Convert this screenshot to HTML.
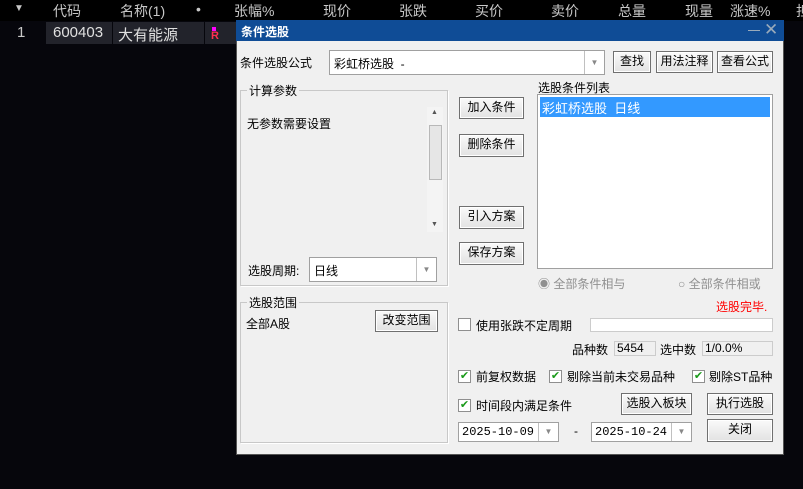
<!DOCTYPE html><html><head><meta charset="utf-8"><style>
*{margin:0;padding:0;box-sizing:border-box}
body{width:803px;height:489px;background:#06060c;position:relative;overflow:hidden;font-family:"Liberation Sans","Noto Sans CJK SC",sans-serif;font-size:12px;color:#000}
.a{position:absolute;white-space:nowrap}
.h{color:#c8c8c8;font-size:14px;top:1px}
.btn{position:absolute;background:linear-gradient(#fafafa,#e2e2e2);border:1px solid #707070;box-shadow:inset 0 0 0 1px #fff;text-align:center;font-size:12px;line-height:19px}
.w{position:absolute;background:#fff;border:1px solid #a0a0a0}
.grp{position:absolute;border:1px solid #c8c8c8;box-shadow:1px 1px 0 #fff}
.gl{position:absolute;background:#f0f0f0;padding:0 2px;top:-9px;left:6px;font-size:12px}
.cb{position:absolute;width:13px;height:13px;border:1px solid #8f8f8f;background:#fff;font-size:11px;line-height:11px;color:#1a9a1a;text-align:center}
.dd{position:absolute;right:0;top:0;bottom:0;width:20px;border-left:1px solid #c0c0c0;color:#888;font-size:8px;text-align:center}
.g{color:#909090}
</style></head><body>
<div class="a" style="left:0;top:0;width:803px;height:21px;background:#000"></div>
<div class="a" style="left:14px;top:3px;color:#c8c8c8;font-size:10px">▼</div>
<div class="a h" style="left:53px">代码</div>
<div class="a h" style="left:120px">名称(1)</div>
<div class="a h" style="left:196px">•</div>
<div class="a h" style="left:234px">张幅%</div>
<div class="a h" style="left:323px">现价</div>
<div class="a h" style="left:399px">张跌</div>
<div class="a h" style="left:475px">买价</div>
<div class="a h" style="left:551px">卖价</div>
<div class="a h" style="left:618px">总量</div>
<div class="a h" style="left:685px">现量</div>
<div class="a h" style="left:730px">涨速%</div>
<div class="a h" style="left:796px">担</div>
<div class="a" style="left:46px;top:22px;width:66px;height:22px;background:#22232b"></div>
<div class="a" style="left:113px;top:22px;width:91px;height:22px;background:#22232b"></div>
<div class="a" style="left:205px;top:22px;width:31px;height:22px;background:#22232b"></div>
<div class="a" style="left:17px;top:24px;color:#c8c8c8;font-size:15px">1</div>
<div class="a" style="left:53px;top:24px;color:#e0e0e0;font-size:15px">600403</div>
<div class="a" style="left:118px;top:24px;color:#e0e0e0;font-size:15px">大有能源</div>
<div class="a" style="left:212px;top:27px;width:4px;height:4px;background:#f0f"></div>
<div class="a" style="left:211px;top:30px;color:#ff3050;font-size:11px;font-weight:bold">R</div>

<div class="a" style="left:236px;top:20px;width:548px;height:435px;background:#f0f0f0;border:1px solid #555"></div>
<div class="a" style="left:236px;top:20px;width:548px;height:21px;background:#0f4c96"></div>
<div class="a" style="left:241px;top:23px;color:#fff;font-weight:bold;font-size:12px">条件选股</div>
<div class="a" style="left:748px;top:30px;width:12px;height:1px;background:#9ab"></div>
<div class="a" style="left:764px;top:20px;color:#9ab;font-size:17px">✕</div>

<div class="a" style="left:240px;top:54px">条件选股公式</div>
<div class="w" style="left:329px;top:50px;width:276px;height:25px"><span class="a" style="left:4px;top:4px">彩虹桥选股&nbsp; -</span><div class="dd" style="line-height:23px">▼</div></div>
<div class="btn" style="left:613px;top:51px;width:38px;height:22px">查找</div>
<div class="btn" style="left:656px;top:51px;width:57px;height:22px">用法注释</div>
<div class="btn" style="left:717px;top:51px;width:56px;height:22px">查看公式</div>

<div class="grp" style="left:240px;top:90px;width:208px;height:196px"><div class="gl">计算参数</div></div>
<div class="a" style="left:247px;top:115px">无参数需要设置</div>
<div class="a" style="left:427px;top:107px;width:16px;height:125px;background:#f4f4f4"></div>
<div class="a" style="left:431px;top:109px;font-size:7px;color:#555">▲</div>
<div class="a" style="left:431px;top:221px;font-size:7px;color:#555">▼</div>
<div class="a" style="left:429px;top:125px;width:13px;height:55px;background:#e6e6e6;border:1px solid #b8b8b8"></div>
<div class="a" style="left:248px;top:262px">选股周期:</div>
<div class="w" style="left:309px;top:257px;width:128px;height:25px"><span class="a" style="left:4px;top:4px">日线</span><div class="dd" style="line-height:23px">▼</div></div>

<div class="grp" style="left:240px;top:302px;width:208px;height:141px"><div class="gl">选股范围</div></div>
<div class="a" style="left:246px;top:315px">全部A股</div>
<div class="btn" style="left:375px;top:310px;width:63px;height:22px">改变范围</div>

<div class="btn" style="left:459px;top:97px;width:65px;height:22px">加入条件</div>
<div class="btn" style="left:459px;top:134px;width:65px;height:23px">删除条件</div>
<div class="btn" style="left:459px;top:206px;width:65px;height:23px">引入方案</div>
<div class="btn" style="left:459px;top:242px;width:65px;height:23px">保存方案</div>

<div class="a" style="left:538px;top:79px">选股条件列表</div>
<div class="w" style="left:537px;top:94px;width:236px;height:175px"><div class="a" style="left:2px;top:2px;width:230px;height:20px;background:#3399ff;color:#fff;font-size:13px;padding:1px 2px">彩虹桥选股&nbsp; 日线</div></div>
<div class="a g" style="left:538px;top:275px">◉ 全部条件相与</div>
<div class="a g" style="left:678px;top:275px">○ 全部条件相或</div>
<div class="a" style="left:716px;top:298px;color:#f00">选股完毕.</div>

<div class="cb" style="left:458px;top:318px"></div>
<div class="a" style="left:476px;top:317px">使用张跌不定周期</div>
<div class="w" style="left:590px;top:318px;width:183px;height:14px;border-color:#ccc"></div>
<div class="a" style="left:572px;top:341px">品种数</div>
<div class="a" style="left:614px;top:341px;width:42px;height:15px;border:1px solid #ccc;padding-left:2px;line-height:13px">5454</div>
<div class="a" style="left:660px;top:341px">选中数</div>
<div class="a" style="left:702px;top:341px;width:71px;height:15px;border:1px solid #ccc;padding-left:2px;line-height:13px">1/0.0%</div>

<div class="cb" style="left:458px;top:370px">✔</div><div class="a" style="left:476px;top:368px">前复权数据</div>
<div class="cb" style="left:549px;top:370px">✔</div><div class="a" style="left:567px;top:368px">剔除当前未交易品种</div>
<div class="cb" style="left:692px;top:370px">✔</div><div class="a" style="left:709px;top:368px">剔除ST品种</div>
<div class="cb" style="left:458px;top:399px">✔</div><div class="a" style="left:476px;top:397px">时间段内满足条件</div>
<div class="btn" style="left:621px;top:393px;width:71px;height:22px">选股入板块</div>
<div class="btn" style="left:707px;top:393px;width:66px;height:22px">执行选股</div>
<div class="w" style="left:458px;top:422px;width:101px;height:20px"><span class="a" style="left:3px;top:2px;font-family:'Liberation Mono',monospace">2025-10-09</span><div class="dd" style="line-height:18px">▼</div></div>
<div class="a" style="left:574px;top:424px">-</div>
<div class="w" style="left:591px;top:422px;width:101px;height:20px"><span class="a" style="left:3px;top:2px;font-family:'Liberation Mono',monospace">2025-10-24</span><div class="dd" style="line-height:18px">▼</div></div>
<div class="btn" style="left:707px;top:419px;width:66px;height:23px">关闭</div>
</body></html>
